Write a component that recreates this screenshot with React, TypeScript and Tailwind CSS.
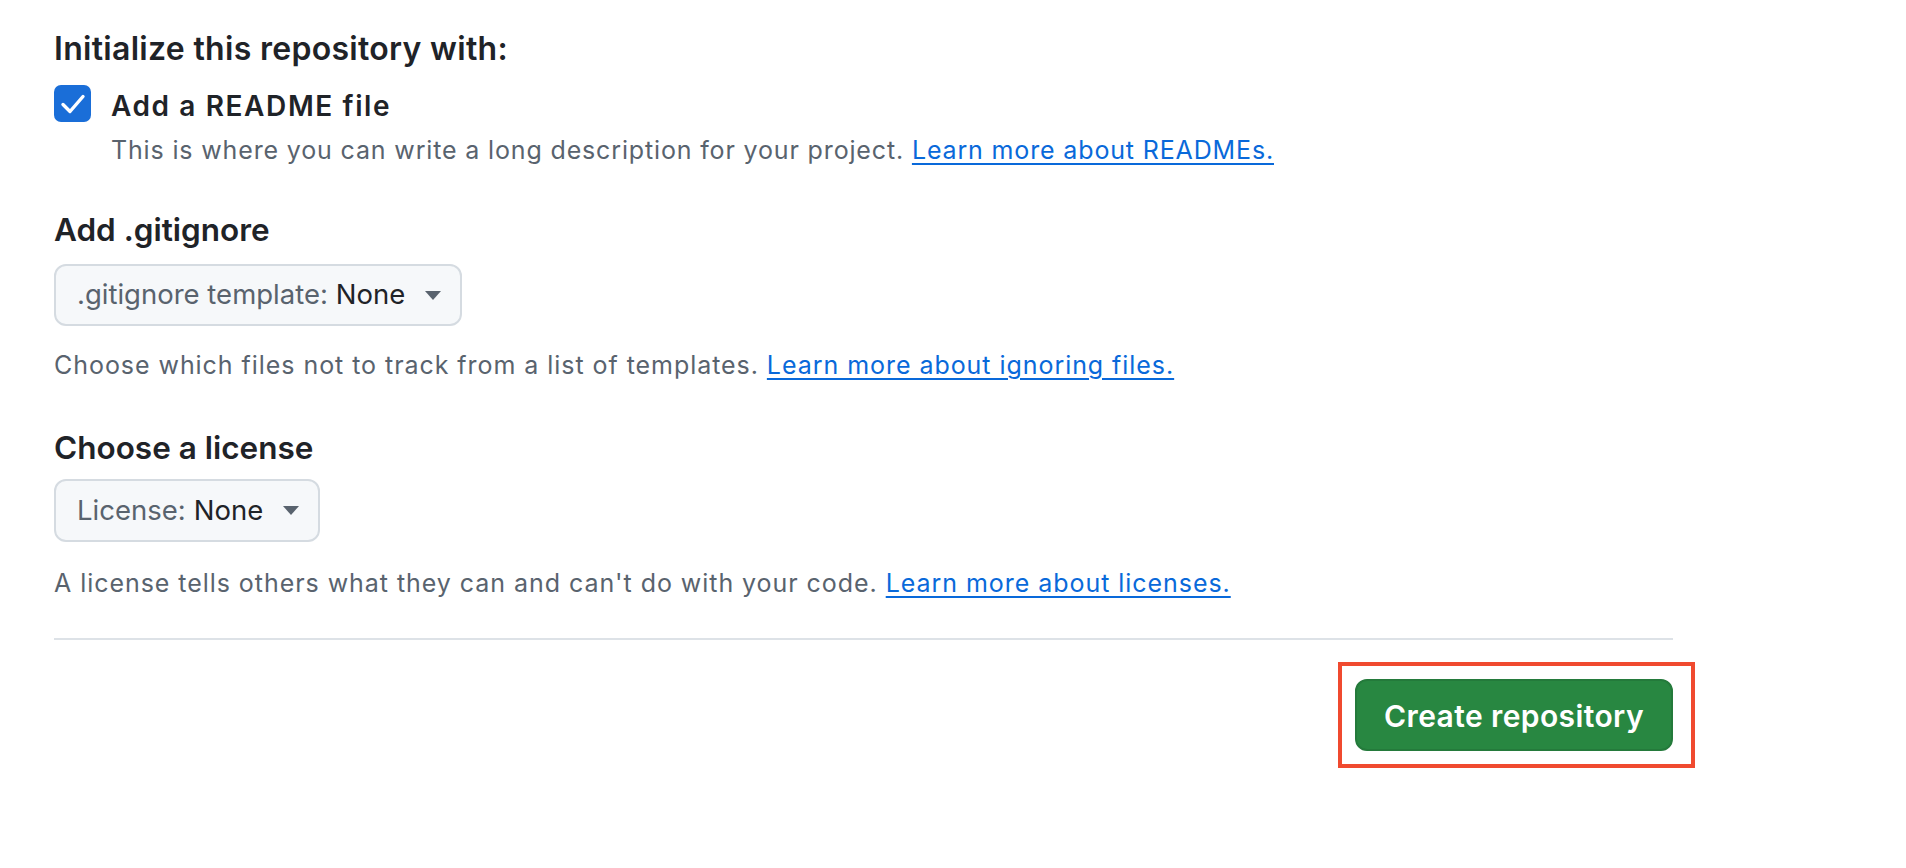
import React from "react";

const font = { fontFamily: "Inter, 'Noto Sans', 'Liberation Sans', sans-serif" };

function Caret() {
  return (
    <svg width="16" height="9" viewBox="0 0 16 9" className="ml-[20px]">
      <path d="M0 0 L16 0 L8 9 Z" fill="#59636e" />
    </svg>
  );
}

export default function App() {
  return (
    <div className="min-h-[868px] w-full bg-white text-[#1f2328]" style={font}>
      <div className="w-[1619px] pl-[54px] pt-[29px] box-content">
        <h3 className="text-[32px] leading-[40px] font-semibold tracking-[0.3px]">Initialize this repository with:</h3>

        <div className="mt-[16px] flex">
          <div className="w-[37px] h-[37px] rounded-[7px] bg-[#1a6ed8] flex items-center justify-center shrink-0">
            <svg width="26" height="22" viewBox="0 0 26 22">
              <path d="M3 11.5 L10 18.5 L23 3.5" fill="none" stroke="white" strokeWidth="3.4" strokeLinecap="round" strokeLinejoin="round" />
            </svg>
          </div>
          <div className="ml-[20px]">
            <div className="mt-[1px] text-[28px] leading-[40px] font-semibold tracking-[1.6px]">Add a README file</div>
            <div className="mt-[6px] text-[25px] leading-[36px] text-[#59636e] tracking-[0.85px]">
              This is where you can write a long description for your project.{" "}
              <a className="text-[#0969da] underline underline-offset-[4px]" href="#">Learn more about READMEs.</a>
            </div>
          </div>
        </div>

        <h3 className="mt-[42px] text-[31.5px] leading-[40px] font-semibold">Add .gitignore</h3>
        <div className="mt-[14px] inline-flex h-[62px] items-center rounded-[12px] border-2 border-[#d5dbe1] bg-[#f6f8fa] pl-[21px] pr-[19px] text-[27.5px]">
          <span className="text-[#59636e]">.gitignore template:</span>
          <span className="ml-[8px] text-[#1f2328]">None</span>
          <Caret />
        </div>
        <div className="mt-[21px] text-[25px] leading-[36px] text-[#59636e] tracking-[0.95px]">
          Choose which files not to track from a list of templates.{" "}
          <a className="text-[#0969da] underline underline-offset-[4px]" href="#">Learn more about ignoring files.</a>
        </div>

        <h3 className="mt-[45px] text-[31.5px] leading-[40px] font-semibold">Choose a license</h3>
        <div className="mt-[11px] inline-flex h-[63px] items-center rounded-[12px] border-2 border-[#d5dbe1] bg-[#f6f8fa] pl-[21px] pr-[19px] text-[27.5px]">
          <span className="text-[#59636e]">License:</span>
          <span className="ml-[8px] text-[#1f2328]">None</span>
          <Caret />
        </div>
        <div className="mt-[23px] text-[25px] leading-[36px] text-[#59636e] tracking-[0.95px]">
          A license tells others what they can and can't do with your code.{" "}
          <a className="text-[#0969da] underline underline-offset-[4px]" href="#">Learn more about licenses.</a>
        </div>

        <div className="mt-[37px] h-[2px] bg-[#dde2e7]" />

        <div className="mt-[39px] flex justify-end">
          <div className="relative">
            <button className="h-[72px] w-[318px] rounded-[12px] bg-[#288741] border-2 border-[#247a3b] text-white text-[30px] font-semibold tracking-[0.4px] pt-[3px]">
              Create repository
            </button>
            <div className="absolute left-[-17px] top-[-17px] right-[-22px] bottom-[-17px] border-[4px] border-[#f04a2f]" />
          </div>
        </div>
      </div>
    </div>
  );
}
